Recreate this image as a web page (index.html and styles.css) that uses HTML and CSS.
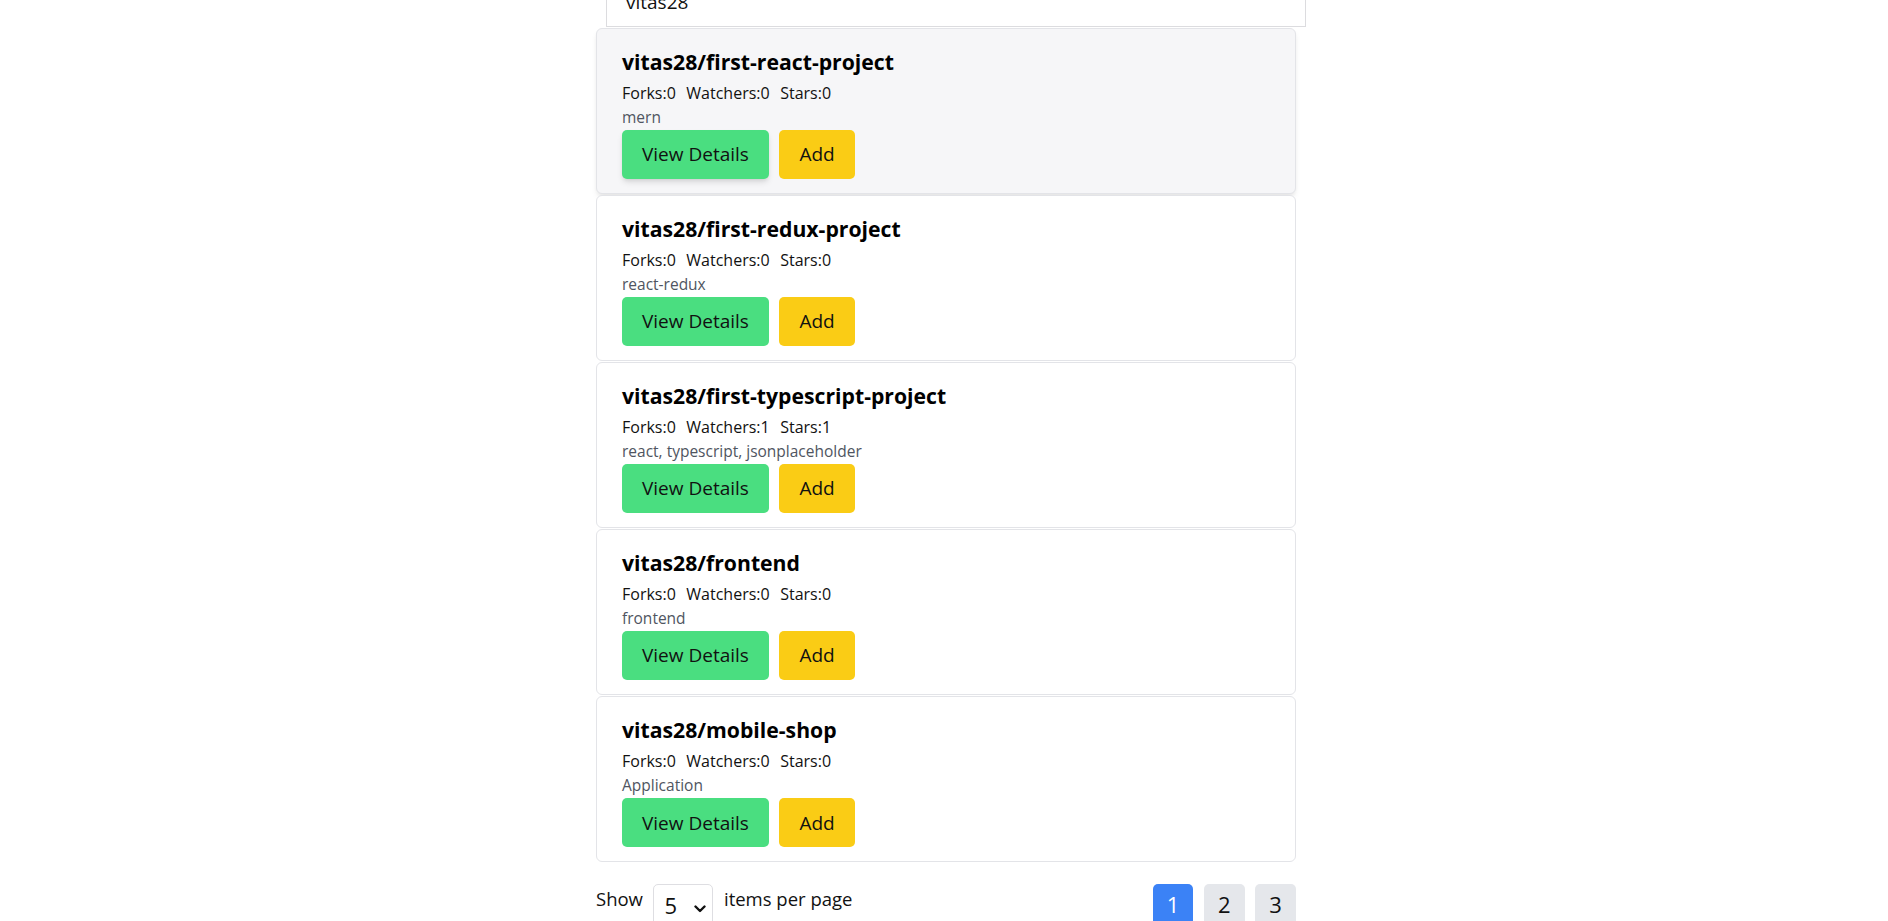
FILE: index.html
```html
<!DOCTYPE html>
<html lang="en">
<head>
<meta charset="utf-8">
<title>Repositories</title>
<link rel="stylesheet" href="styles.css">
</head>
<body>
<main class="page">
  <div class="search">
    <input class="search-input" type="text" value="vitas28">
  </div>

  <section class="list">
    <article class="card card-hover">
      <h2 class="card-title">vitas28/first-react-project</h2>
      <div class="stats"><span>Forks:0</span><span>Watchers:0</span><span>Stars:0</span></div>
      <p class="desc">mern</p>
      <div class="actions">
        <button class="btn btn-green btn-raised">View Details</button>
        <button class="btn btn-yellow">Add</button>
      </div>
    </article>

    <article class="card">
      <h2 class="card-title">vitas28/first-redux-project</h2>
      <div class="stats"><span>Forks:0</span><span>Watchers:0</span><span>Stars:0</span></div>
      <p class="desc">react-redux</p>
      <div class="actions">
        <button class="btn btn-green">View Details</button>
        <button class="btn btn-yellow">Add</button>
      </div>
    </article>

    <article class="card">
      <h2 class="card-title">vitas28/first-typescript-project</h2>
      <div class="stats"><span>Forks:0</span><span>Watchers:1</span><span>Stars:1</span></div>
      <p class="desc">react, typescript, jsonplaceholder</p>
      <div class="actions">
        <button class="btn btn-green">View Details</button>
        <button class="btn btn-yellow">Add</button>
      </div>
    </article>

    <article class="card">
      <h2 class="card-title">vitas28/frontend</h2>
      <div class="stats"><span>Forks:0</span><span>Watchers:0</span><span>Stars:0</span></div>
      <p class="desc">frontend</p>
      <div class="actions">
        <button class="btn btn-green">View Details</button>
        <button class="btn btn-yellow">Add</button>
      </div>
    </article>

    <article class="card">
      <h2 class="card-title">vitas28/mobile-shop</h2>
      <div class="stats"><span>Forks:0</span><span>Watchers:0</span><span>Stars:0</span></div>
      <p class="desc">Application</p>
      <div class="actions">
        <button class="btn btn-green">View Details</button>
        <button class="btn btn-yellow">Add</button>
      </div>
    </article>
  </section>

  <footer class="pager">
    <div class="per-page">
      <span class="label">Show</span>
      <div class="select">
        <span class="select-value">5</span>
        <svg class="chevron" width="12" height="8" viewBox="0 0 12 8"><path d="M1.5 1.5 L6 6 L10.5 1.5" fill="none" stroke="#111" stroke-width="2.4" stroke-linecap="round" stroke-linejoin="round"/></svg>
      </div>
      <span class="label label-after">items per page</span>
    </div>
    <nav class="pages">
      <button class="page-btn page-active">1</button>
      <button class="page-btn">2</button>
      <button class="page-btn">3</button>
    </nav>
  </footer>
</main>
</body>
</html>
```
FILE: styles.css
```css
html, body {
  margin: 0;
  padding: 0;
  background: #ffffff;
}

body {
  font-family: "Open Sans", "Noto Sans", sans-serif;
  color: #111111;
  overflow: hidden;
}

.page {
  width: 700px;
  margin: 0 auto;
  padding-left: 4px;
}

.search {
  margin-top: -23px;
  margin-left: 10px;
}

.search-input {
  box-sizing: border-box;
  width: 700px;
  height: 50px;
  border: 1px solid #dcdcdf;
  border-radius: 0;
  padding: 0 0 0 19px;
  font-family: "Open Sans", "Noto Sans", sans-serif;
  font-size: 19px;
  color: #111111;
  background: #ffffff;
  outline: none;
}

.list {
  margin-top: 1px;
  display: flex;
  flex-direction: column;
  gap: 1px;
}

.card {
  box-sizing: border-box;
  border: 1px solid #e3e4e8;
  border-radius: 6px;
  background: #ffffff;
  padding: 19px 24px 14.3px 25px;
}

.card-hover {
  background: #f6f6f8;
  box-shadow: 0 4px 6px -1px rgba(0, 0, 0, 0.08), 0 2px 4px -2px rgba(0, 0, 0, 0.08);
}

.card-title {
  margin: 0;
  font-size: 21.2px;
  line-height: 28px;
  font-weight: 700;
  color: #000000;
}

.stats {
  margin-top: 5px;
  display: flex;
  gap: 10.5px;
  font-size: 16px;
  line-height: 24px;
  color: #111111;
}

.desc {
  margin: 1px 0 0;
  font-size: 15.5px;
  line-height: 23.5px;
  color: #4f5561;
}

.actions {
  display: flex;
  gap: 10.5px;
}

.btn {
  height: 49.3px;
  padding: 0 20px;
  border: none;
  border-radius: 5px;
  font-family: "Open Sans", "Noto Sans", sans-serif;
  font-size: 19px;
  line-height: 28px;
  color: #111111;
  cursor: pointer;
}

.btn-green {
  background: #4ade80;
}

.btn-yellow {
  background: #facc15;
}

.btn-raised {
  box-shadow: 0 4px 6px -1px rgba(0, 0, 0, 0.12), 0 2px 4px -2px rgba(0, 0, 0, 0.1);
}

.pager {
  margin-top: 22px;
  display: flex;
  justify-content: space-between;
  align-items: flex-start;
}

.per-page {
  display: flex;
  align-items: flex-start;
  gap: 10px;
}

.label {
  font-size: 18.5px;
  line-height: 28px;
  color: #111111;
  padding-top: 1px;
}

.label-after {
  margin-left: 1px;
}

.select {
  box-sizing: border-box;
  width: 60px;
  height: 46px;
  border: 1px solid #dedee2;
  border-radius: 5px;
  display: flex;
  align-items: flex-start;
  justify-content: space-between;
  padding: 5px 6px 0 10.5px;
}

.select-value {
  font-size: 22px;
  line-height: 30px;
  color: #111111;
}

.chevron {
  margin-top: 15px;
}

.pages {
  display: flex;
  gap: 10.6px;
}

.page-btn {
  box-sizing: border-box;
  width: 40.7px;
  height: 46px;
  border: none;
  border-radius: 5px;
  padding: 6px 0 0;
  background: #e5e7eb;
  font-family: "Open Sans", "Noto Sans", sans-serif;
  font-size: 22px;
  line-height: 28px;
  color: #111111;
  display: flex;
  justify-content: center;
  align-items: flex-start;
}

.page-active {
  background: #3b82f6;
  color: #ffffff;
}
```
